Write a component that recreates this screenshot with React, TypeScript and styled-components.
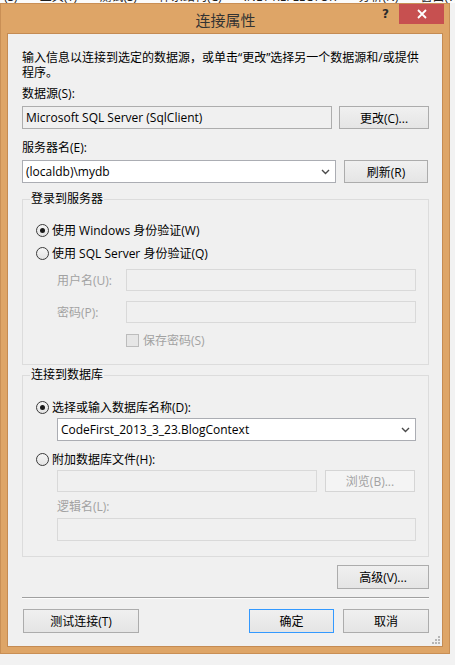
import React from 'react';
import styled, { createGlobalStyle, css } from 'styled-components';

const GlobalStyle = createGlobalStyle`
	html, body {
		margin: 0;
		padding: 0;
		background: #f2f2f2;
	}
	body {
		font-family: 'Open Sans', 'Noto Sans CJK SC', sans-serif;
		font-size: 12px;
		color: #000;
	}
`;

const Page = styled.div`
	width: 455px;
	height: 665px;
	display: flex;
	flex-direction: column;
	overflow: hidden;
`;

const MenuStrip = styled.div`
	height: 3px;
	background: #fbfbfb;
	overflow: hidden;
	display: flex;
	align-items: flex-end;
	gap: 22px;
	padding-left: 4px;
	white-space: nowrap;
`;

const MenuItem = styled.span`
	line-height: 12px;
	font-size: 12px;
	color: #1e1e1e;
`;

const Window = styled.div`
	width: 450px;
	box-sizing: border-box;
	background: #dea567;
	border: 1px solid #c98f55;
	padding: 0 6px 6px;
	display: flex;
	flex-direction: column;
`;

const TitleBar = styled.div`
	height: 29px;
	margin: 0 -6px;
	padding: 0 5px 0 6px;
	display: grid;
	grid-template-columns: 1fr auto 1fr;
	align-items: start;
`;

const Title = styled.div`
	grid-column: 2;
	padding-top: 6px;
	font-size: 15px;
	line-height: 20px;
	color: #333;
	font-family: 'Noto Sans CJK SC', sans-serif;
`;

const Controls = styled.div`
	grid-column: 3;
	justify-self: end;
	display: flex;
	align-items: flex-start;
`;

const Help = styled.span`
	font-family: 'DejaVu Sans', sans-serif;
	font-weight: bold;
	font-size: 12px;
	line-height: 20px;
	color: #2b2b2b;
	margin-right: 10px;
`;

const CloseButton = styled.div`
	width: 45px;
	height: 20px;
	background: #c75050;
	display: flex;
	align-items: center;
	justify-content: center;
`;

const Client = styled.div`
	position: relative;
	box-sizing: border-box;
	height: 614px;
	background: #f0f0f0;
	border: 1px solid #c48b53;
	padding: 16px 13px 0 14px;
	display: flex;
	flex-direction: column;
`;

const Intro = styled.div`
	line-height: 15px;
`;

const Label = styled.div<{ $top?: number; $indent?: number; $disabled?: boolean }>`
	line-height: 15px;
	height: 15px;
	margin-top: ${(p) => p.$top ?? 0}px;
	margin-left: ${(p) => p.$indent ?? 0}px;
	color: ${(p) => (p.$disabled ? '#a2a2a2' : '#000')};
	white-space: nowrap;
`;

const Row = styled.div<{ $top?: number; $indent?: number; $gap?: number }>`
	display: flex;
	align-items: center;
	margin-top: ${(p) => p.$top ?? 0}px;
	margin-left: ${(p) => p.$indent ?? 0}px;
	gap: ${(p) => p.$gap ?? 0}px;
`;

const TextBox = styled.div<{ $width: number; $height?: number; $variant?: 'normal' | 'readonly' | 'disabled' }>`
	box-sizing: border-box;
	width: ${(p) => p.$width}px;
	height: ${(p) => p.$height ?? 23}px;
	padding: 0 3px;
	display: flex;
	align-items: center;
	white-space: nowrap;
	border: 1px solid #abadb3;
	background: #fff;
	${(p) =>
		p.$variant === 'readonly' &&
		css`
			background: #f0f0f0;
			border-color: #adadad;
		`}
	${(p) =>
		p.$variant === 'disabled' &&
		css`
			background: #f0f0f0;
			border-color: #d9d9d9;
		`}
`;

const ComboText = styled.span`
	flex: 1;
`;

const Chevron = () => (
	<svg width="9" height="6" viewBox="0 0 9 6">
		<path d="M1 1 L4.5 4.5 L8 1" fill="none" stroke="#4a4a4a" strokeWidth="1.4" />
	</svg>
);

const ChevronSlot = styled.span`
	display: flex;
	margin-right: 2px;
`;

const Button = styled.div<{ $width: number; $height?: number; $primary?: boolean; $disabled?: boolean }>`
	box-sizing: border-box;
	width: ${(p) => p.$width}px;
	height: ${(p) => p.$height ?? 23}px;
	display: flex;
	align-items: center;
	justify-content: center;
	border: 1px solid ${(p) => (p.$primary ? '#3399ff' : '#acacac')};
	background: linear-gradient(#f0f0f0, #e5e5e5);
	white-space: nowrap;
	${(p) =>
		p.$disabled &&
		css`
			border-color: #d5d5d5;
			background: #f4f4f4;
			color: #a2a2a2;
		`}
`;

const Group = styled.fieldset<{ $top: number; $bottom: number }>`
	margin: ${(p) => p.$top}px 0 0;
	padding: 0 0 ${(p) => p.$bottom}px;
	border: 1px solid #dcdcdc;
	min-width: 0;
	display: flex;
	flex-direction: column;
`;

const Legend = styled.legend`
	margin-left: 7px;
	padding: 0 1px;
	line-height: 16px;
	font-size: 12px;
`;

const RadioRow = styled.div<{ $top: number }>`
	display: flex;
	align-items: center;
	gap: 3px;
	height: 16px;
	margin: ${(p) => p.$top}px 0 0 13px;
`;

const RadioCircle = styled.span<{ $checked?: boolean }>`
	box-sizing: border-box;
	width: 13px;
	height: 13px;
	border-radius: 50%;
	border: 1px solid #3a3a3a;
	background: linear-gradient(#f6f6f6, #e3e3e3);
	display: flex;
	align-items: center;
	justify-content: center;
	&::after {
		content: '';
		width: 5px;
		height: 5px;
		border-radius: 50%;
		background: ${(p) => (p.$checked ? '#1a1a1a' : 'transparent')};
	}
`;

const CredRow = styled.div<{ $top: number }>`
	display: grid;
	grid-template-columns: 69px 290px;
	align-items: center;
	margin: ${(p) => p.$top}px 0 0 34px;
`;

const CheckRow = styled.div<{ $top: number }>`
	display: flex;
	align-items: center;
	gap: 4px;
	height: 16px;
	margin: ${(p) => p.$top}px 0 0 103px;
	color: #a2a2a2;
`;

const CheckBox = styled.span`
	box-sizing: border-box;
	width: 13px;
	height: 13px;
	border: 1px solid #bcbcbc;
	background: #e6e6e6;
`;

const Separator = styled.div`
	margin-top: 8px;
	height: 1px;
	background: #a0a0a0;
	border-bottom: 1px solid #fcfcfc;
`;

const Footer = styled.div`
	margin-top: 10px;
	display: flex;
	justify-content: space-between;
	padding-left: 1px;
`;

const FooterRight = styled.div`
	display: flex;
	gap: 9px;
`;

const Grip = styled.svg`
	position: absolute;
	right: 1px;
	bottom: 1px;
`;

const SizeGrip = () => (
	<Grip width="10" height="10" viewBox="0 0 10 10">
		{[
			[7, 1],
			[4, 4],
			[7, 4],
			[1, 7],
			[4, 7],
			[7, 7],
		].map(([x, y]) => (
			<rect key={`${x}-${y}`} x={x} y={y} width="2" height="2" fill="#b6b6b6" />
		))}
	</Grip>
);

const App: React.FC = () => {
	return (
		<Page>
			<GlobalStyle />
			<MenuStrip>
				<MenuItem>(S)</MenuItem>
				<MenuItem>工具(T)</MenuItem>
				<MenuItem>测试(S)</MenuItem>
				<MenuItem>体系结构(C)</MenuItem>
				<MenuItem>.NET REFLECTOR</MenuItem>
				<MenuItem>分析(N)</MenuItem>
				<MenuItem>窗口(W)</MenuItem>
			</MenuStrip>
			<Window>
				<TitleBar>
					<Title>连接属性</Title>
					<Controls>
						<Help>?</Help>
						<CloseButton>
							<svg width="10" height="10" viewBox="0 0 10 10">
								<path d="M1 1 L9 9 M9 1 L1 9" stroke="#fff" strokeWidth="1.8" />
							</svg>
						</CloseButton>
					</Controls>
				</TitleBar>
				<Client>
					<Intro>
						输入信息以连接到选定的数据源，或单击“更改”选择另一个数据源和/或提供
						<br />
						程序。
					</Intro>
					<Label $top={6}>数据源(S):</Label>
					<Row $top={5} $gap={7}>
						<TextBox $width={310} $variant="readonly">
							Microsoft SQL Server (SqlClient)
						</TextBox>
						<Button $width={90}>更改(C)...</Button>
					</Row>
					<Label $top={11}>服务器名(E):</Label>
					<Row $top={5} $gap={8}>
						<TextBox $width={314}>
							<ComboText>(localdb)\mydb</ComboText>
							<ChevronSlot>
								<Chevron />
							</ChevronSlot>
						</TextBox>
						<Button $width={84}>刷新(R)</Button>
					</Row>

					<Group $top={8} $bottom={16}>
						<Legend>登录到服务器</Legend>
						<RadioRow $top={15}>
							<RadioCircle $checked />
							使用 Windows 身份验证(W)
						</RadioRow>
						<RadioRow $top={7}>
							<RadioCircle />
							使用 SQL Server 身份验证(Q)
						</RadioRow>
						<CredRow $top={8}>
							<Label $disabled>用户名(U):</Label>
							<TextBox $width={290} $height={22} $variant="disabled" />
						</CredRow>
						<CredRow $top={10}>
							<Label $disabled>密码(P):</Label>
							<TextBox $width={290} $height={22} $variant="disabled" />
						</CredRow>
						<CheckRow $top={9}>
							<CheckBox />
							保存密码(S)
						</CheckRow>
					</Group>

					<Group $top={2} $bottom={15}>
						<Legend>连接到数据库</Legend>
						<RadioRow $top={16}>
							<RadioCircle $checked />
							选择或输入数据库名称(D):
						</RadioRow>
						<Row $top={3} $indent={34}>
							<TextBox $width={359}>
								<ComboText>CodeFirst_2013_3_23.BlogContext</ComboText>
								<ChevronSlot>
									<Chevron />
								</ChevronSlot>
							</TextBox>
						</Row>
						<RadioRow $top={10}>
							<RadioCircle />
							附加数据库文件(H):
						</RadioRow>
						<Row $top={3} $indent={34} $gap={8}>
							<TextBox $width={260} $height={22} $variant="disabled" />
							<Button $width={90} $height={22} $disabled>
								浏览(B)...
							</Button>
						</Row>
						<Label $top={7} $indent={34} $disabled>
							逻辑名(L):
						</Label>
						<Row $top={4} $indent={34}>
							<TextBox $width={359} $variant="disabled" />
						</Row>
					</Group>

					<Row $top={8} style={{ justifyContent: 'flex-end' }}>
						<Button $width={92} $height={24}>
							高级(V)...
						</Button>
					</Row>
					<Separator />
					<Footer>
						<Button $width={116} $height={24}>
							测试连接(T)
						</Button>
						<FooterRight>
							<Button $width={85} $height={24} $primary>
								确定
							</Button>
							<Button $width={86} $height={24}>
								取消
							</Button>
						</FooterRight>
					</Footer>
					<SizeGrip />
				</Client>
			</Window>
		</Page>
	);
};

export default App;
